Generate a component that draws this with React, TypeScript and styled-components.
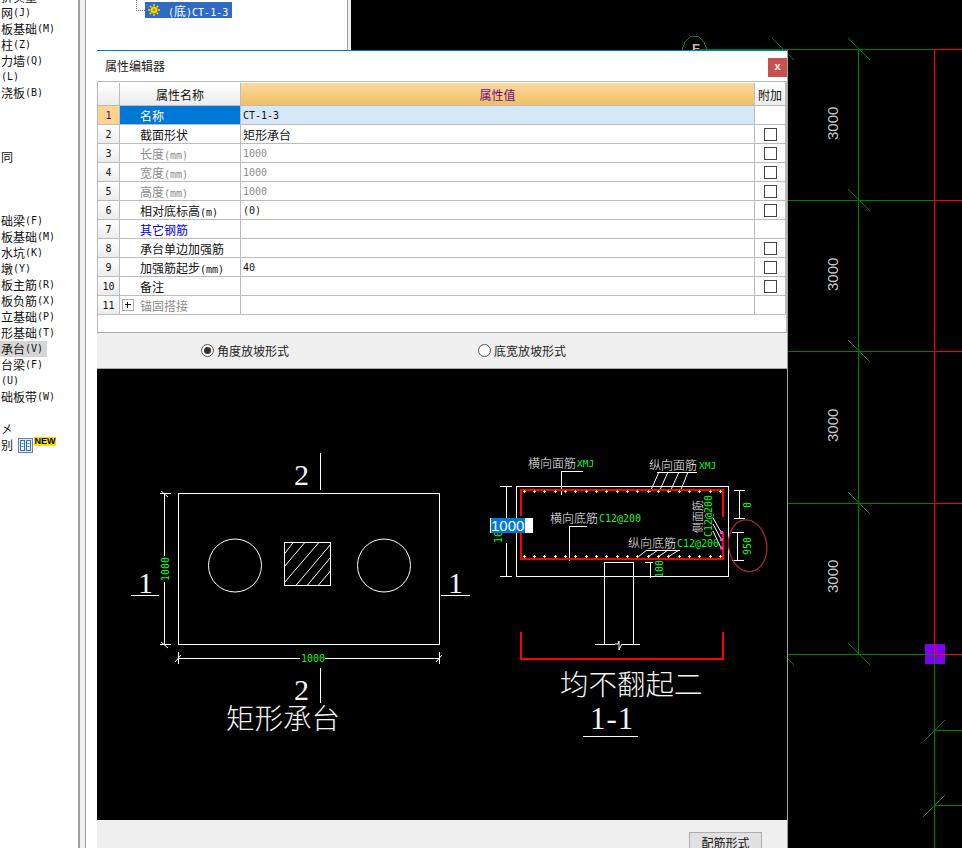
import React from "react";
import styled, { createGlobalStyle } from "styled-components";

const Global = createGlobalStyle`
  html, body { margin: 0; padding: 0; background: #000; overflow: hidden; }
  * { box-sizing: border-box; }
`;

const cjk = `"Noto Sans CJK SC", "Liberation Sans", sans-serif`;
const mono = `"DejaVu Sans Mono", "Liberation Mono", monospace`;

const Page = styled.div`
  position: relative;
  width: 962px;
  height: 848px;
  display: flex;
  overflow: hidden;
  font-family: ${cjk};
  font-size: 12px;
  color: #111;
`;

const Sidebar = styled.div`
  width: 78px;
  height: 100%;
  background: #fff;
  overflow: hidden;
  flex: none;
`;

const SideList = styled.div`
  margin-top: -11px;
  display: flex;
  flex-direction: column;
`;

const SideItem = styled.div<{ $active?: boolean }>`
  height: 16px;
  width: ${(p) => (p.$active ? "47px" : "auto")};
  line-height: 16px;
  padding-left: 1px;
  white-space: nowrap;
  display: flex;
  align-items: center;
  background: ${(p) => (p.$active ? "#d6d6d6" : "transparent")};
`;

const Latin = styled.span`
  font-family: ${mono};
  font-size: 10px;
`;

const Splitter = styled.div`
  width: 8px;
  flex: none;
  background: #f0f0f0;
  border-left: 2px solid #a0a0a0;
  border-right: 1px solid #a0a0a0;
`;

const TreePanel = styled.div`
  width: 261px;
  flex: none;
  background: #fff;
  padding: 2px 0 0 50px;
`;

const TreeRow = styled.div`
  display: flex;
  align-items: flex-start;
`;

const TreeConnector = styled.div`
  width: 9px;
  height: 11px;
  margin-top: -2px;
  border-left: 1px dotted #777;
  border-bottom: 1px dotted #777;
`;

const TreeSelected = styled.div`
  width: 87px;
  height: 16px;
  display: flex;
  align-items: center;
  gap: 8px;
  padding-left: 3px;
  background: #316ac5;
  color: #fff;
  white-space: nowrap;
`;

const PaneEdge = styled.div`
  width: 4px;
  flex: none;
  background: #f0f0f0;
  border-left: 1px solid #9a9aa2;
`;

const Canvas = styled.svg`
  flex: 1;
  height: 100%;
  display: block;
  background: #000;
`;

const DimText = styled.text`
  font-family: "Liberation Sans", sans-serif;
  font-size: 15px;
  fill: #c8c8c8;
`;

const AxisText = styled.text`
  font-family: "Liberation Sans", sans-serif;
  font-size: 13px;
  font-weight: 700;
  fill: #bbb;
`;

const Dialog = styled.div`
  position: absolute;
  left: 97px;
  top: 50px;
  width: 691px;
  height: 798px;
  display: flex;
  flex-direction: column;
  background: #efefef;
  border-top: 1px solid #0078d7;
  border-right: 1px solid #a0a0a0;
`;

const TitleBar = styled.div`
  height: 30px;
  flex: none;
  display: flex;
  align-items: flex-start;
  justify-content: space-between;
  background: #fff;
  padding: 7px 0 0 8px;
  line-height: 15px;
  color: #222;
`;

const CloseButton = styled.div`
  width: 19px;
  height: 19px;
  background: #c75050;
  color: #fff;
  font-family: "Liberation Mono", monospace;
  font-size: 11px;
  font-weight: 700;
  line-height: 18px;
  text-align: center;
`;

const TableWrap = styled.div`
  height: 252px;
  flex: none;
  background: #fff;
  border-top: 1px solid #b9b9b9;
  border-left: 1px solid #b9b9b9;
  border-right: 1px solid #b9b9b9;
  border-bottom: 1px solid #a8a8a8;
  padding-top: 1px;
`;

const Row = styled.div<{ $header?: boolean }>`
  display: grid;
  grid-template-columns: 22px 121px 514px 31px;
  height: ${(p) => (p.$header ? "23px" : "19px")};
`;

const Cell = styled.div`
  border-right: 1px solid #bcbcbc;
  border-bottom: 1px solid #bcbcbc;
  display: flex;
  align-items: center;
  white-space: nowrap;
  overflow: hidden;
`;

const HeadCell = styled(Cell)<{ $accent?: boolean }>`
  justify-content: center;
  background: ${(p) =>
    p.$accent
      ? "linear-gradient(#fad9a0, #f1bf63)"
      : "linear-gradient(#ffffff, #ececec)"};
  color: ${(p) => (p.$accent ? "#6a0a8a" : "#111")};
  font-size: 12px;
`;

const NumCell = styled(Cell)<{ $active?: boolean }>`
  justify-content: center;
  font-family: ${mono};
  font-size: 10px;
  background: ${(p) =>
    p.$active ? "#fcd38f" : "linear-gradient(#ffffff, #ececec)"};
  color: ${(p) => (p.$active ? "#4a0a80" : "#111")};
`;

const NameCell = styled(Cell)<{ $active?: boolean; $tone?: string }>`
  padding-left: ${(p) => (p.$tone === "group" ? "2px" : "20px")};
  background: ${(p) => (p.$active ? "#0078d7" : "#fff")};
  color: ${(p) =>
    p.$active
      ? "#fff"
      : p.$tone === "muted" || p.$tone === "group"
      ? "#8c8c8c"
      : p.$tone === "link"
      ? "#0000f0"
      : "#111"};
`;

const ValueCell = styled(Cell)<{ $active?: boolean; $muted?: boolean }>`
  padding-left: 2px;
  background: ${(p) => (p.$active ? "#d6e8f7" : "#fff")};
  color: ${(p) => (p.$muted ? "#8c8c8c" : "#111")};
`;

const ExtraCell = styled(Cell)`
  justify-content: center;
  background: #fff;
`;

const CheckBox = styled.span`
  width: 13px;
  height: 13px;
  margin-left: 1px;
  border: 1px solid #444;
  background: #fff;
`;

const Expander = styled.span`
  position: relative;
  width: 12px;
  height: 12px;
  flex: none;
  margin-right: 6px;
  border: 1px solid #aaa;
  background: #fff;
  &::before {
    content: "";
    position: absolute;
    left: 2px;
    top: 4px;
    width: 6px;
    height: 1px;
    background: #111;
  }
  &::after {
    content: "";
    position: absolute;
    left: 4px;
    top: 2px;
    width: 1px;
    height: 6px;
    background: #111;
  }
`;

const RadioStrip = styled.div`
  height: 36px;
  flex: none;
  display: grid;
  grid-template-columns: 277px 1fr;
  align-items: center;
  padding-left: 104px;
  background: #efefef;
  border-bottom: 1px solid #a8a8a8;
`;

const RadioOption = styled.div`
  display: flex;
  align-items: center;
  gap: 3px;
  color: #222;
`;

const RadioDot = styled.span<{ $checked?: boolean }>`
  width: 13px;
  height: 13px;
  border-radius: 50%;
  border: 1px solid #555;
  background: #fff;
  display: flex;
  align-items: center;
  justify-content: center;
  &::after {
    content: "";
    width: 7px;
    height: 7px;
    border-radius: 50%;
    background: ${(p) => (p.$checked ? "#333" : "transparent")};
  }
`;

const CadArea = styled.div`
  position: relative;
  height: 451px;
  flex: none;
  background: #000;
`;

const CadSvg = styled.svg`
  display: block;
  width: 690px;
  height: 451px;
`;

const CadLabel = styled.text<{ $size?: number }>`
  font-family: ${cjk};
  font-size: ${(p) => p.$size ?? 12}px;
  font-weight: 300;
  fill: #f4f4f4;
`;

const CadNote = styled.text<{ $size?: number }>`
  font-family: ${mono};
  font-size: ${(p) => p.$size ?? 10}px;
  fill: #12f52a;
`;

const CadSerif = styled.text<{ $size?: number; $spacing?: number }>`
  font-family: "Liberation Serif", ${cjk};
  font-size: ${(p) => p.$size ?? 30}px;
  letter-spacing: ${(p) => p.$spacing ?? 0}px;
  fill: #f4f4f4;
`;

const EditBox = styled.div`
  position: absolute;
  left: 393px;
  top: 149px;
  width: 43px;
  height: 15px;
  background: #fff;
  padding-left: 1px;
`;

const EditSelection = styled.span`
  display: block;
  width: 34px;
  height: 15px;
  background: #0078d7;
  color: #fff;
  font-family: "Liberation Sans", sans-serif;
  font-size: 15px;
  line-height: 15px;
`;

const Footer = styled.div`
  height: 28px;
  flex: none;
  display: flex;
  justify-content: flex-end;
  align-items: flex-start;
  padding: 12px 25px 0 0;
  background: #efefef;
  overflow: hidden;
`;

const ActionButton = styled.div`
  width: 73px;
  height: 24px;
  flex: none;
  border: 1px solid #adadad;
  background: #e1e1e1;
  text-align: center;
  line-height: 20px;
  color: #111;
`;

const BookSlot = styled.span`
  display: flex;
  margin: 0 1px 0 5px;
`;

const NewBadge = styled.span`
  align-self: flex-start;
  width: 22px;
  height: 9px;
  background: #ffe000;
  color: #000;
  font-family: "Liberation Sans", sans-serif;
  font-size: 9px;
  font-weight: 700;
  line-height: 9px;
  text-align: center;
`;

const sideRows: { zh: string; en?: string; active?: boolean }[] = [
  { zh: "折实量" }, { zh: "网", en: "(J)" }, { zh: "板基础", en: "(M)" }, { zh: "柱", en: "(Z)" },
  { zh: "力墙", en: "(Q)" }, { zh: "", en: "(L)" }, { zh: "浇板", en: "(B)" }, { zh: "" }, { zh: "" },
  { zh: "" }, { zh: "同" }, { zh: "" }, { zh: "" }, { zh: "" },
  { zh: "础梁", en: "(F)" }, { zh: "板基础", en: "(M)" }, { zh: "水坑", en: "(K)" }, { zh: "墩", en: "(Y)" },
  { zh: "板主筋", en: "(R)" }, { zh: "板负筋", en: "(X)" }, { zh: "立基础", en: "(P)" }, { zh: "形基础", en: "(T)" },
  { zh: "承台", en: "(V)", active: true }, { zh: "台梁", en: "(F)" }, { zh: "", en: "(U)" }, { zh: "础板带", en: "(W)" },
  { zh: "" }, { zh: "㐅" },
];

type TableRow = { name: React.ReactNode; value?: React.ReactNode; tone?: string; check?: boolean; muted?: boolean };

const tableRows: TableRow[] = [
  { name: "名称", value: <Latin>CT-1-3</Latin> },
  { name: "截面形状", value: "矩形承台", check: true },
  { name: <span>长度<Latin>(mm)</Latin></span>, value: <Latin>1000</Latin>, tone: "muted", muted: true, check: true },
  { name: <span>宽度<Latin>(mm)</Latin></span>, value: <Latin>1000</Latin>, tone: "muted", muted: true, check: true },
  { name: <span>高度<Latin>(mm)</Latin></span>, value: <Latin>1000</Latin>, tone: "muted", muted: true, check: true },
  { name: <span>相对底标高<Latin>(m)</Latin></span>, value: <Latin>(0)</Latin>, check: true },
  { name: "其它钢筋", tone: "link" },
  { name: "承台单边加强筋", check: true },
  { name: <span>加强筋起步<Latin>(mm)</Latin></span>, value: <Latin>40</Latin>, check: true },
  { name: "备注", check: true },
  { name: <><Expander />锚固搭接</>, tone: "group" },
];

const Gear = () => (
  <svg width="12" height="12" viewBox="0 0 12 12">
    <g stroke="#ffe600" strokeWidth="1.4">
      <path d="M6 0v12M0 6h12M1.8 1.8l8.4 8.4M10.2 1.8l-8.4 8.4" />
    </g>
    <circle cx="6" cy="6" r="3.6" fill="#ffe600" stroke="#7a6a00" strokeWidth="0.6" />
    <circle cx="6" cy="6" r="1.4" fill="#a08a00" />
  </svg>
);

const BookIcon = () => (
  <svg width="15" height="15" viewBox="0 0 15 15">
    <rect x="0.5" y="0.5" width="14" height="14" fill="#dfe9f5" stroke="#6a7f9a" />
    <rect x="2.5" y="2.5" width="4" height="10" fill="#fff" stroke="#2f74c8" />
    <rect x="8.5" y="2.5" width="4" height="10" fill="#fff" stroke="#2f74c8" />
    <path d="M3.5 5.5h2M3.5 8.5h2M9.5 5.5h2M9.5 8.5h2" stroke="#2f74c8" />
  </svg>
);

const G = "#008000";
const R = "#ff0000";

const GridLines = () => (
  <g strokeWidth="1" fill="none" shapeRendering="crispEdges">
    <rect x="925" y="644" width="20" height="20" fill="#7f00f0" stroke="none" />
    {[49.5, 200.5, 351.5, 503.5, 654.5].map((y) => (
      <React.Fragment key={y}>
        <line x1="700" y1={y} x2="934" y2={y} stroke={G} />
        <line x1="934" y1={y} x2="962" y2={y} stroke={R} />
      </React.Fragment>
    ))}
    <line x1="858.5" y1="49" x2="858.5" y2="654" stroke={G} />
    <line x1="934.5" y1="49" x2="934.5" y2="654" stroke={R} />
    <line x1="934.5" y1="654" x2="934.5" y2="848" stroke={G} />
    <line x1="934" y1="730.5" x2="962" y2="730.5" stroke={G} />
    <line x1="934" y1="805.5" x2="962" y2="805.5" stroke={G} />
    {[49, 200, 351, 503, 654].map((y) => (
      <line key={y} x1="848" y1={y - 11} x2="870" y2={y + 11} stroke={G} />
    ))}
    <line x1="772" y1="38" x2="794" y2="60" stroke={G} />
    <line x1="788" y1="659" x2="794" y2="665" stroke={G} />
    <line x1="924" y1="741" x2="945" y2="720" stroke={G} />
    <line x1="923" y1="817" x2="945" y2="795" stroke={G} />
    <polyline points="682,50 685,42 690,37 694,36 699,37 704,42 707,50" stroke={G} />
  </g>
);

const dotXs = Array.from({ length: 20 }, (_, i) => 524 + i * 10.35);

const PlanView = () => (
  <g stroke="#fff" strokeWidth="1" fill="none">
    <rect x="178.5" y="493.5" width="261" height="151" shapeRendering="crispEdges" />
    <circle cx="235" cy="565.5" r="26.5" />
    <circle cx="384" cy="565.5" r="26.5" />
    <rect x="284.5" y="542.5" width="46" height="43" shapeRendering="crispEdges" />
    <path d="M284.3 554L293.3 542.3M284.3 566.7L305 542.3M284.3 582.7L319 542.3M296 585.3L330.7 544.3M307.3 585.3L330.7 557.3M318.3 585.3L330.7 570.7" />
    <g shapeRendering="crispEdges">
      <path d="M164.5 493V556M164.5 582V645M160 493.5H171M160 644.5H171" />
      <path d="M178 658.5H300M325 658.5H439M178.5 652V664M439.5 652V664" />
      <path d="M320.5 453V490M320.5 668V703M131 595.5H159M441 595.5H470" />
    </g>
    <path d="M161 491L168 497M161 642L168 648M175 662L181 655M436 662L442 655" />
  </g>
);

const SectionLines = () => (
  <>
    <g stroke="#fff" strokeWidth="1" fill="none">
      <g shapeRendering="crispEdges">
        <rect x="516.5" y="486.5" width="212" height="90" />
        <path d="M506.5 486V518M506.5 543V577M500 486.5H512M500 576.5H512" />
        <path d="M561.5 495V471.5H583M569.5 561V526.5H587M657 472.5H697M647 550.5H680" />
        <path d="M739.5 490V518M734 490.5H745M734 518.5H745M737.5 532V560M732 532.5H744M732 560.5H744" />
        <path d="M604.5 644V562.5H633.5V644M595 644.5H615M622 644.5H640" />
        <path d="M650.5 562V578M645 562.5H653" />
        <path d="M583 736.5H638" />
      </g>
      <path d="M659 472L650 492M668 472L659 492M679 472L670 492M688 472L680 492" />
      <path d="M647 550L638 557M658 550L648 557M668 550L658 557M679 550L668 557" />
      <path d="M713 518L721 532M713 524L721 539M713 531L721 548" />
      <path d="M615 644L618 644L619 641L619 650L622 644" />
    </g>
    <path
      d="M521 516V490H723V516.5M521 533V558.5H723V532"
      stroke={R}
      strokeWidth="2"
      fill="none"
      shapeRendering="crispEdges"
    />
    <path d="M521 632V658.5H722.5V632" stroke={R} strokeWidth="2" fill="none" shapeRendering="crispEdges" />
    {dotXs.map((x) => (
      <React.Fragment key={x}>
        <path d={`M${x - 1.5} 491H${x + 1.5}M${x} 489.5V492.5`} stroke="#ffff30" shapeRendering="crispEdges" />
        <path d={`M${x - 1.5} 556.5H${x + 1.5}M${x} 555V558`} stroke="#ffff30" shapeRendering="crispEdges" />
      </React.Fragment>
    ))}
    {[532, 539, 547.5].map((y) => (
      <rect key={y} x="720" y={y - 1} width="3" height="3" fill="#ff30ff" />
    ))}
    <ellipse
      cx="747.7"
      cy="545.7"
      rx="19"
      ry="26"
      stroke="#a52a2a"
      strokeWidth="1.3"
      fill="none"
      transform="rotate(-8 747.7 545.7)"
    />
  </>
);

const CadDrawing = () => (
  <CadSvg viewBox="97 369 690 451">
    <PlanView />
    <SectionLines />
    <CadSerif x="294" y="485">2</CadSerif>
    <CadSerif x="294" y="700">2</CadSerif>
    <CadSerif x="138" y="593">1</CadSerif>
    <CadSerif x="448" y="593">1</CadSerif>
    <CadNote x="301" y="662">1000</CadNote>
    <CadNote transform="rotate(-90 169 581)" x="169" y="581">1000</CadNote>
    <CadLabel x="226" y="729" $size={28.5}>矩形承台</CadLabel>
    <CadLabel x="560" y="695" $size={28.5}>均不翻起二</CadLabel>
    <CadSerif x="590" y="729" $size={31} $spacing={1}>1-1</CadSerif>

    <CadLabel x="528" y="468">横向面筋</CadLabel>
    <CadNote x="577" y="467" $size={9.5}>XMJ</CadNote>
    <CadLabel x="649" y="470">纵向面筋</CadLabel>
    <CadNote x="699" y="469" $size={9.5}>XMJ</CadNote>
    <CadLabel x="550" y="523">横向底筋</CadLabel>
    <CadNote x="599" y="522">C12@200</CadNote>
    <CadLabel x="628" y="548">纵向底筋</CadLabel>
    <CadNote x="677" y="547">C12@200</CadNote>
    <CadLabel transform="rotate(-90 702 533)" x="702" y="533" $size={11}>侧面筋</CadLabel>
    <CadNote transform="rotate(-90 712 537)" x="712" y="537">C12@200</CadNote>
    <CadNote transform="rotate(-90 751 508)" x="751" y="508">0</CadNote>
    <CadNote transform="rotate(-90 751 555)" x="751" y="555">950</CadNote>
    <CadNote transform="rotate(-90 663 578)" x="663" y="578">100</CadNote>
    <CadNote transform="rotate(-90 502 543)" x="502" y="543">10</CadNote>
  </CadSvg>
);

export default function App() {
  return (
    <Page>
      <Global />
      <Sidebar>
        <SideList>
          {sideRows.map((r, i) => (
            <SideItem key={i} $active={r.active}>
              {r.zh}
              {r.en && <Latin>{r.en}</Latin>}
            </SideItem>
          ))}
          <SideItem>
            别
            <BookSlot>
              <BookIcon />
            </BookSlot>
            <NewBadge>NEW</NewBadge>
          </SideItem>
        </SideList>
      </Sidebar>
      <Splitter />
      <TreePanel>
        <TreeRow>
          <TreeConnector />
          <TreeSelected>
            <Gear />
            <span>
              <Latin>(</Latin>底<Latin>)CT-1-3</Latin>
            </span>
          </TreeSelected>
        </TreeRow>
      </TreePanel>
      <PaneEdge />
      <Canvas viewBox="351 0 611 848">
        <GridLines />
        <AxisText x="692" y="53">F</AxisText>
        {[123, 274, 425, 576].map((y) => (
          <DimText key={y} transform={`rotate(-90 838 ${y + 17})`} x="838" y={y + 17}>
            3000
          </DimText>
        ))}
      </Canvas>

      <Dialog>
        <TitleBar>
          属性编辑器
          <CloseButton>x</CloseButton>
        </TitleBar>
        <TableWrap>
          <Row $header>
            <HeadCell />
            <HeadCell>属性名称</HeadCell>
            <HeadCell $accent>属性值</HeadCell>
            <HeadCell>附加</HeadCell>
          </Row>
          {tableRows.map((r, i) => (
            <Row key={i}>
              <NumCell $active={i === 0}>{i + 1}</NumCell>
              <NameCell $active={i === 0} $tone={r.tone}>{r.name}</NameCell>
              <ValueCell $active={i === 0} $muted={r.muted}>{r.value}</ValueCell>
              <ExtraCell>{r.check && <CheckBox />}</ExtraCell>
            </Row>
          ))}
        </TableWrap>
        <RadioStrip>
          <RadioOption>
            <RadioDot $checked />
            角度放坡形式
          </RadioOption>
          <RadioOption>
            <RadioDot />
            底宽放坡形式
          </RadioOption>
        </RadioStrip>
        <CadArea>
          <CadDrawing />
          <EditBox>
            <EditSelection>1000</EditSelection>
          </EditBox>
        </CadArea>
        <Footer>
          <ActionButton>配筋形式</ActionButton>
        </Footer>
      </Dialog>
    </Page>
  );
}
